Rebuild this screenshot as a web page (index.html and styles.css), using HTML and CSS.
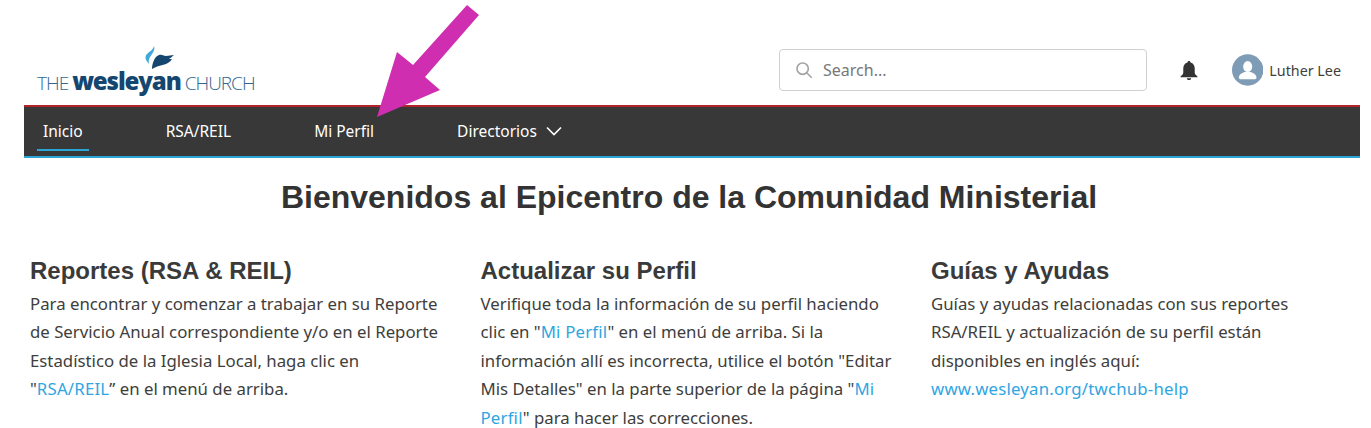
FILE: index.html
```html
<!DOCTYPE html>
<html>
<head>
    <meta charset="UTF-8">
    <title>Epicentro</title>
    <link rel="stylesheet" href="styles.css">
</head>
<body>
<div class="page">
    <header class="top">
        <div class="logo">
            <svg class="logo-mark" viewBox="0 0 32 24" width="32" height="24">
                <path d="M10 0 C11 3 10 5 8 8 C6 11 4 13 5 18 C2 15 0 11 3 8 C6 5 9 4 10 0 Z" fill="#3fa9dc"/>
                <path d="M8 23 C8 17 11 10 15 9 C18 8 20 10 22 10 C25 10 27 9 30 9 C28 11 26 12 25 13 C27 13 27 13 28 13 C24 20 16 18 8 23 Z" fill="#15466f"/>
            </svg>
            <div class="logo-text"><span class="logo-thin">THE</span><span class="logo-bold">wesleyan</span><span class="logo-thin">CHURCH</span></div>
        </div>
        <div class="top-right">
            <div class="search">
                <svg viewBox="0 0 20 20" width="18" height="18" fill="none" stroke="#a3a3a3" stroke-width="1.8">
                    <circle cx="8.5" cy="8.5" r="6.3"/>
                    <path d="M13 13 L18 18" stroke-linecap="round"/>
                </svg>
                <span>Search...</span>
            </div>
            <svg class="bell" viewBox="0 0 20 22" width="20" height="21">
                <path d="M10 1 C11 1 11.6 1.7 11.6 2.6 C14.6 3.4 16 6 16 9 L16 13 C16 15 17.5 15.8 18.8 17 L18.8 18 L1.2 18 L1.2 17 C2.5 15.8 4 15 4 13 L4 9 C4 6 5.4 3.4 8.4 2.6 C8.4 1.7 9 1 10 1 Z" fill="#333"/>
                <path d="M7.8 19 L12.2 19 C12.2 20.3 11.2 21 10 21 C8.8 21 7.8 20.3 7.8 19 Z" fill="#333"/>
            </svg>
            <div class="user">
                <svg viewBox="0 0 32 32" width="32" height="32">
                    <circle cx="16" cy="16" r="16" fill="#7f9cb6"/>
                    <ellipse cx="16" cy="12.5" rx="4.6" ry="5.6" fill="#fff"/>
                    <path d="M7 24 C7 20 11 19 13 18 L19 18 C21 19 25 20 25 24 C25 25 24 25.5 23 25.5 L9 25.5 C8 25.5 7 25 7 24 Z" fill="#fff"/>
                </svg>
                <span>Luther Lee</span>
            </div>
        </div>
    </header>

    <nav class="nav">
        <a class="nav-item active">Inicio</a>
        <a class="nav-item">RSA/REIL</a>
        <a class="nav-item">Mi Perfil</a>
        <a class="nav-item">Directorios
            <svg viewBox="0 0 16 10" width="16" height="10" fill="none" stroke="#fff" stroke-width="1.6"><path d="M1 1.5 L8 8.5 L15 1.5"/></svg>
        </a>
    </nav>

    <h1>Bienvenidos al Epicentro de la Comunidad Ministerial</h1>

    <div class="columns">
        <section>
            <h2>Reportes (RSA &amp; REIL)</h2>
            <p>Para encontrar y comenzar a trabajar en su Reporte de Servicio Anual correspondiente y/o en el Reporte Estadístico de la Iglesia Local, haga clic en<br>"<a>RSA/REIL</a>” en el menú de arriba.</p>
        </section>
        <section>
            <h2>Actualizar su Perfil</h2>
            <p>Verifique toda la información de su perfil haciendo clic en "<a>Mi Perfil</a>" en el menú de arriba. Si la información allí es incorrecta, utilice el botón "Editar Mis Detalles" en la parte superior de la página "<a>Mi Perfil</a>" para hacer las correcciones.</p>
        </section>
        <section>
            <h2>Guías y Ayudas</h2>
            <p>Guías y ayudas relacionadas con sus reportes RSA/REIL y actualización de su perfil están disponibles en inglés aquí:<br><a>www.wesleyan.org/twchub-help</a></p>
        </section>
    </div>
</div>

<svg class="arrow" viewBox="0 0 110 120" width="110" height="120">
    <path d="M97 5 L109 15 L55 77 L70 90 L7 117 L27 52 L43 65 Z" fill="#cf2eb0"/>
</svg>
</body>
</html>
```

FILE: styles.css
```css
html, body {
    height: 100%;
    overflow: hidden;
}

body {
    margin: 0;
    background: #fff;
    font-family: "Noto Sans", Arial, sans-serif;
    color: #3e3e3c;
}

.page {
    margin-left: 24px;
    width: 1336px;
}

.top {
    height: 105px;
    display: flex;
    justify-content: space-between;
    align-items: flex-start;
}

.logo {
    margin: 46px 0 0 13px;
    width: 220px;
}

.logo-mark {
    display: block;
    margin-left: 107px;
}

.logo-text {
    display: flex;
    align-items: baseline;
    gap: 4px;
    height: 24px;
    line-height: 22px;
    color: #15466f;
    white-space: nowrap;
}

.logo-thin {
    font-family: "Open Sans", sans-serif;
    font-weight: 300;
    font-size: 19px;
    letter-spacing: -1px;
    color: #33668f;
}

.logo-bold {
    font-family: "Open Sans", sans-serif;
    font-weight: 800;
    font-size: 24px;
    letter-spacing: -1.1px;
}

.top-right {
    display: flex;
    align-items: center;
    margin-top: 49px;
}

.search {
    box-sizing: border-box;
    width: 368px;
    height: 42px;
    border: 1px solid #d0d0d0;
    border-radius: 4px;
    display: flex;
    align-items: center;
    gap: 10px;
    padding-left: 15px;
    font-size: 16px;
    color: #777;
    margin-right: 32px;
}

.bell {
    margin-right: 33px;
}

.user {
    display: flex;
    align-items: center;
    gap: 6px;
    font-size: 14.3px;
    margin-right: 19px;
    width: 109px;
    white-space: nowrap;
}

.nav {
    height: 49px;
    background: #383838;
    border-top: 2px solid #b5232a;
    border-bottom: 2px solid #2aa5d8;
    display: flex;
    gap: 71px;
    padding-left: 13px;
}

.nav-item {
    box-sizing: border-box;
    color: #fff;
    font-size: 15.5px;
    padding: 6px 6px 0;
    display: flex;
    align-items: center;
    gap: 9px;
    height: 44px;
    border-bottom: 2px solid transparent;
}

.nav-item.active {
    border-bottom-color: #2aa5d8;
}

h1 {
    margin: 21px 0 0;
    text-align: center;
    font-family: "Liberation Sans", Arial, sans-serif;
    font-size: 32px;
    line-height: 36px;
    font-weight: 700;
    color: #333;
    padding-right: 6px;
}

.columns {
    display: grid;
    grid-template-columns: repeat(3, 450.5px);
    margin: 42px 0 0 6px;
}

section {
    padding-right: 32px;
}

h2 {
    margin: 0;
    font-family: "Liberation Sans", Arial, sans-serif;
    font-size: 24px;
    line-height: 28px;
    font-weight: 700;
    color: #3a3a3a;
}

p {
    margin: 5px 0 0;
    font-size: 16.8px;
    line-height: 28.4px;
}

p a {
    color: #30a5e2;
    letter-spacing: 0.2px;
}

.arrow {
    position: absolute;
    left: 370px;
    top: 0;
    overflow: visible;
}
```
